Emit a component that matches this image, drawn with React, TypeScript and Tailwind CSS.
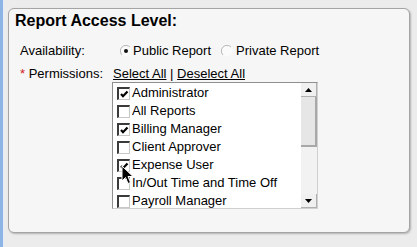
import React from "react";

const items: { label: string; checked: boolean }[] = [
  { label: "Administrator", checked: true },
  { label: "All Reports", checked: false },
  { label: "Billing Manager", checked: true },
  { label: "Client Approver", checked: false },
  { label: "Expense User", checked: true },
  { label: "In/Out Time and Time Off", checked: false },
  { label: "Payroll Manager", checked: false },
];

function Check({ checked }: { checked: boolean }) {
  return (
    <span className="relative block w-[13px] h-[13px] shrink-0 bg-white border-t-2 border-l-2 border-t-[#3a3a3a] border-l-[#3a3a3a] border-b border-r border-b-[#c8c8c8] border-r-[#c8c8c8]">
      {checked && (
        <svg width="9" height="9" viewBox="0 0 9 9" className="absolute left-[1px] top-[1px]">
          <path d="M1 4 L3 6.2 L7.5 1.5" stroke="#000" strokeWidth="2.2" fill="none" />
        </svg>
      )}
    </span>
  );
}

function Radio({ on }: { on: boolean }) {
  return (
    <svg width="12" height="12" viewBox="0 0 12 12" className="shrink-0">
      <circle cx="6" cy="6" r="5.5" fill="#fafafa" />
      <path d="M2 10 A5.5 5.5 0 0 1 10 2" stroke="#b8b8b8" strokeWidth="1" fill="none" />
      {on && <circle cx="6" cy="6" r="2" fill="#111" />}
    </svg>
  );
}

export default function App() {
  return (
    <div
      className="w-[417px] h-[247px] bg-[#ececec] flex overflow-hidden text-[13px] text-black"
      style={{ fontFamily: '"Liberation Sans", Arial, sans-serif' }}
    >
      <div className="w-[3px] h-full bg-[#8db4e4]" />
      <div className="w-[1px] h-full bg-[#e4ecf6]" />
      <div className="pt-[8px] pl-[4px]">
        <div className="relative w-[402px] h-[225px] bg-[#f6f6f6] border border-[#a4a4a4] rounded-[6px] shadow-[1px_1px_2px_rgba(0,0,0,0.25)] pt-[3px] pl-[6px]">
          <div className="text-[16px] font-bold leading-[18px]">Report Access Level:</div>
          <div className="pl-[5px] mt-[11px]">
            <div className="flex items-center h-[20px]">
              <div className="w-[93px] leading-[20px]">Availability:</div>
              <div className="ml-[7px]"><Radio on={true} /></div>
              <span className="ml-[1px]">Public Report</span>
              <div className="ml-[10px]"><Radio on={false} /></div>
              <span className="ml-[3px]">Private Report</span>
            </div>
            <div className="flex mt-[4px]">
              <div className="w-[92px] leading-[18px]">
                <span className="text-[#d21c1c]">*</span> Permissions:
              </div>
              <div className="flex flex-col">
                <div className="leading-[18px] h-[17px] pl-[1px]">
                  <span className="underline">Select All</span> | <span className="underline">Deselect All</span>
                </div>
                <div className="relative w-[206px] h-[127px] bg-white border border-[#8f8f8f] border-r-[#d0d0d0] border-b-[#d0d0d0] flex overflow-hidden">
                  <div className="flex-1 pt-[1px] pl-[4px] overflow-hidden">
                    {items.map((it) => (
                      <div key={it.label} className="flex items-center h-[18px] whitespace-nowrap">
                        <Check checked={it.checked} />
                        <span className="ml-[2px] leading-[18px]">{it.label}</span>
                      </div>
                    ))}
                  </div>
                  <div className="w-[16px] h-full bg-[#f2f2f2] flex flex-col">
                    <div className="h-[14px] flex items-center justify-center bg-[#f0f0f0] border-r border-b border-[#b0b0b0]">
                      <svg width="7" height="4" viewBox="0 0 7 4"><path d="M0 4 L3.5 0 L7 4 Z" fill="#000" /></svg>
                    </div>
                    <div className="h-[50px] bg-[#e6e6e6] border-r-2 border-b-2 border-[#a8a8a8]" />
                    <div className="flex-1" />
                    <div className="h-[14px] flex items-center justify-center bg-[#f0f0f0] border-r border-b border-[#b0b0b0]">
                      <svg width="7" height="4" viewBox="0 0 7 4"><path d="M0 0 L3.5 4 L7 0 Z" fill="#000" /></svg>
                    </div>
                  </div>
                  <svg width="13" height="20" viewBox="0 0 13 20" className="absolute left-[8px] top-[82px]">
                    <path d="M1 1 L1 16 L4.5 12.5 L7 18.5 L9.5 17.5 L7 11.5 L12 11.5 Z" fill="#000" stroke="#fff" strokeWidth="1" />
                  </svg>
                </div>
              </div>
            </div>
          </div>
        </div>
      </div>
    </div>
  );
}
